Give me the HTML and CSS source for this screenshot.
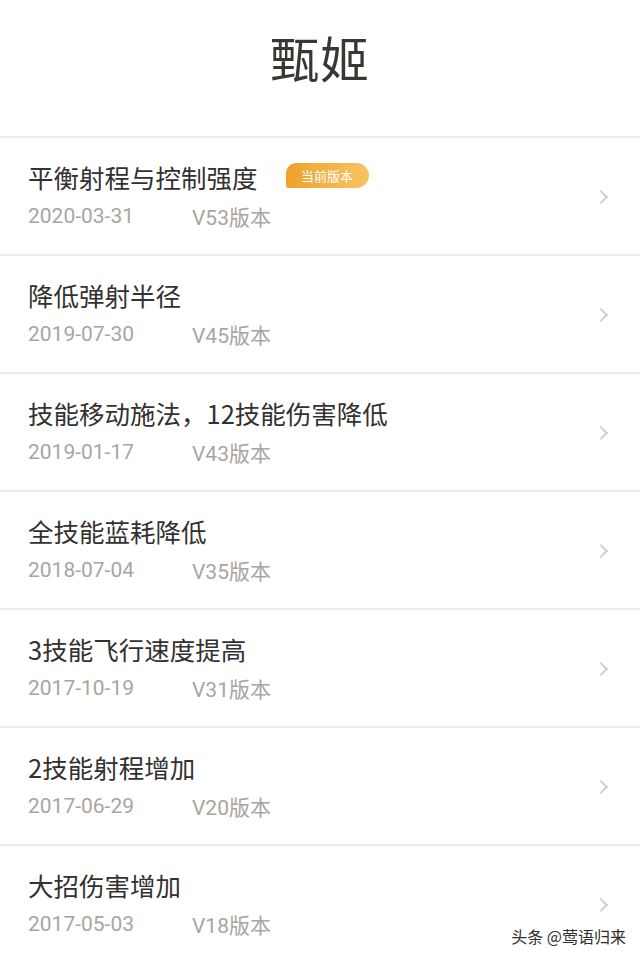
FILE: index.html
```html
<!DOCTYPE html>
<html>
<head>
  <meta charset="utf-8" />
  <title>甄姬 - 调整记录</title>
  <link rel="stylesheet" href="styles.css">
</head>
<body>
<div id="page">

  <!-- HEADER -->
  <div class="header">
    <h1>甄姬</h1>
  </div>

  <!-- HISTORY LIST -->
  <div class="list">
    <div class="row">
      <div class="info">
        <div class="title">平衡射程与控制强度 <span class="badge">当前版本</span></div>
        <div class="meta"><span class="date">2020-03-31</span><span class="ver">V53版本</span></div>
      </div>
      <span class="arrow"></span>
    </div>
    <div class="row">
      <div class="info">
        <div class="title">降低弹射半径</div>
        <div class="meta"><span class="date">2019-07-30</span><span class="ver">V45版本</span></div>
      </div>
      <span class="arrow"></span>
    </div>
    <div class="row">
      <div class="info">
        <div class="title">技能移动施法，12技能伤害降低</div>
        <div class="meta"><span class="date">2019-01-17</span><span class="ver">V43版本</span></div>
      </div>
      <span class="arrow"></span>
    </div>
    <div class="row">
      <div class="info">
        <div class="title">全技能蓝耗降低</div>
        <div class="meta"><span class="date">2018-07-04</span><span class="ver">V35版本</span></div>
      </div>
      <span class="arrow"></span>
    </div>
    <div class="row">
      <div class="info">
        <div class="title">3技能飞行速度提高</div>
        <div class="meta"><span class="date">2017-10-19</span><span class="ver">V31版本</span></div>
      </div>
      <span class="arrow"></span>
    </div>
    <div class="row">
      <div class="info">
        <div class="title">2技能射程增加</div>
        <div class="meta"><span class="date">2017-06-29</span><span class="ver">V20版本</span></div>
      </div>
      <span class="arrow"></span>
    </div>
    <div class="row">
      <div class="info">
        <div class="title">大招伤害增加</div>
        <div class="meta"><span class="date">2017-05-03</span><span class="ver">V18版本</span></div>
      </div>
      <span class="arrow"></span>
    </div>
  </div>

  <div class="watermark">头条 @莺语归来</div>
</div>
</body>
</html>
```

FILE: styles.css
```css
html, body {
  margin: 0;
  padding: 0;
  height: 100%;
  background: #fff;
  font-family: Roboto, "Noto Sans CJK SC", sans-serif;
  box-sizing: border-box;
}
*, *::before, *::after {
  box-sizing: inherit;
}

#page {
  position: relative; /* anchor for watermark */
  height: 961px;
  overflow: hidden;
}

/* Header */
.header {
  height: 138px;
  display: flex;
  align-items: center;
  justify-content: center;
  border-bottom: 2px solid #ebebeb;
  padding-bottom: 24px;
}
.header h1 {
  margin: 0;
  font-family: "Noto Sans CJK SC", sans-serif;
  font-size: 49px;
  font-weight: 400;
  color: #3a3733;
  letter-spacing: 1px;
}

/* Rows */
.row {
  height: 118px;
  display: flex;
  align-items: center;
  padding: 0 28px;
  border-bottom: 2px solid #ebebeb;
}
.info {
  flex: 1 1 auto;
  padding-bottom: 2px;
}
.title {
  display: flex;
  align-items: center;
  height: 32px;
  font-family: "Noto Sans CJK SC", sans-serif;
  font-size: 25.5px;
  color: #333130;
}
.badge {
  display: inline-flex;
  align-items: center;
  justify-content: center;
  width: 83px;
  height: 25px;
  margin-left: 28px;
  margin-top: -2px;
  border-radius: 11px 13px 13px 3px;
  background: linear-gradient(90deg, #efa12c, #f7c462);
  color: #fff;
  font-size: 13px;
}
.meta {
  display: flex;
  margin-top: 9px;
  height: 28px;
  align-items: center;
  font-size: 21px;
  color: #a9a5a0;
}
.date {
  width: 164px;
}

/* Chevron */
.arrow {
  flex: 0 0 auto;
  width: 10px;
  height: 10px;
  margin-right: 6px;
  margin-top: 2px;
  border-top: 2px solid #cfcfcf;
  border-right: 2px solid #cfcfcf;
  transform: rotate(45deg);
}

/* Watermark */
.watermark {
  position: absolute;
  right: 14px;
  bottom: 13px;
  font-family: "Noto Sans CJK SC", sans-serif;
  font-size: 16px;
  color: #2e2e2e;
  text-shadow: 0 0 2px #fff;
}
```
